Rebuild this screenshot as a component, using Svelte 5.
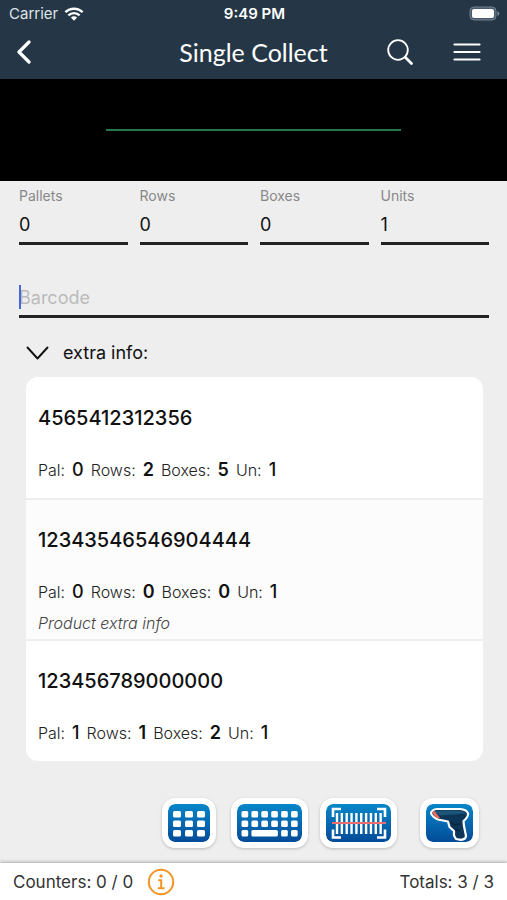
<script lang="ts">
  type Item = {
    code: string;
    pal: number;
    rows: number;
    boxes: number;
    units: number;
    extra?: string;
  };

  let quantities = $state([
    { id: 'pallets', label: 'Pallets', value: '0' },
    { id: 'rows', label: 'Rows', value: '0' },
    { id: 'boxes', label: 'Boxes', value: '0' },
    { id: 'units', label: 'Units', value: '1' },
  ]);

  const items: Item[] = [
    { code: '4565412312356', pal: 0, rows: 2, boxes: 5, units: 1 },
    { code: '12343546546904444', pal: 0, rows: 0, boxes: 0, units: 1, extra: 'Product extra info' },
    { code: '123456789000000', pal: 1, rows: 1, boxes: 2, units: 1 },
  ];

  let barcode = $state('');
  let open = $state(true);

  const pad = [0, 1, 2];
  const keys = [0, 1, 2, 3, 4, 5];
  const bars = [0, 1, 2, 3, 4, 5, 6, 7, 8, 9];
</script>

<div class="screen">
  <header>
    <div class="status">
      <span class="carrier">
        Carrier
        <svg width="20" height="14" viewBox="0 0 20 14" fill="none" stroke="#fff" stroke-width="2.4">
          <path d="M1.4 5.2a12.3 12.3 0 0 1 17.2 0" />
          <path d="M4.4 8.4a8 8 0 0 1 11.2 0" />
          <path d="M10 13.8 6.9 10.6a4.4 4.4 0 0 1 6.2 0Z" fill="#fff" stroke="none" />
        </svg>
      </span>
      <span class="time">9:49 PM</span>
      <svg class="battery" width="31" height="15" viewBox="0 0 31 15">
        <rect x="1" y="1" width="26" height="13" rx="4" fill="#47596a" stroke="#748290" />
        <rect x="3" y="3" width="22" height="9" rx="2" fill="#fff" />
        <path d="M28.5 5v5q1.8-1 1.8-2.5T28.5 5" fill="#82909c" />
      </svg>
    </div>
    <nav>
      <button aria-label="Back">
        <svg width="16" height="26" viewBox="0 0 16 26" fill="none" stroke="#fff" stroke-width="3.2" stroke-linecap="round" stroke-linejoin="round">
          <path d="M14 3 4 13l10 10" />
        </svg>
      </button>
      <h1>Single Collect</h1>
      <button aria-label="Search">
        <svg width="28" height="28" viewBox="0 0 28 28" fill="none" stroke="#fff" stroke-linecap="round">
          <circle cx="12" cy="12" r="9.8" stroke-width="1.8" />
          <path d="m19.5 19.5 6 6" stroke-width="2.8" />
        </svg>
      </button>
      <button aria-label="Menu">
        <svg width="28" height="20" viewBox="0 0 28 20" stroke="#fff" stroke-width="2.2" stroke-linecap="round">
          <path d="M1.5 2.5h25M1.5 10h25M1.5 17.5h25" />
        </svg>
      </button>
    </nav>
  </header>

  <div class="scanner"><div class="beam"></div></div>

  <main>
    <div class="quantities">
      {#each quantities as q (q.id)}
        <div class="field">
          <label for={q.id}>{q.label}</label>
          <input id={q.id} bind:value={q.value} inputmode="numeric" />
        </div>
      {/each}
    </div>

    <div class="barcode">
      {#if !barcode}<span class="caret"></span>{/if}
      <input bind:value={barcode} placeholder="Barcode" aria-label="Barcode" />
    </div>

    <button class="toggle" aria-expanded={open} onclick={() => (open = !open)}>
      <svg width="23" height="14" viewBox="0 0 23 14" fill="none" stroke="#111" stroke-width="1.9" stroke-linecap="round" stroke-linejoin="round">
        <path d="m1.5 1.5 10 11 10-11" />
      </svg>
      extra info:
    </button>

    {#if open}
      <ul>
        {#each items as item (item.code)}
          <li>
            <h2>{item.code}</h2>
            <p class="counts">
              <span>Pal:</span><b>{item.pal}</b>
              <span>Rows:</span><b class="big">{item.rows}</b>
              <span>Boxes:</span><b class="big">{item.boxes}</b>
              <span>Un:</span><b>{item.units}</b>
            </p>
            {#if item.extra}<p class="extra">{item.extra}</p>{/if}
          </li>
        {/each}
      </ul>
    {/if}
  </main>

  <div class="tools">
    <button aria-label="Number pad">
      <svg width="42" height="38" viewBox="0 0 42 38">
        {#each pad as row}
          {#each pad as col}
            <rect x={5 + col * 12} y={7 + row * 9.5} width="8" height="6.5" rx="1.5" fill="#fff" />
          {/each}
        {/each}
      </svg>
    </button>
    <button aria-label="Keyboard">
      <svg width="65" height="38" viewBox="0 0 65 38" fill="#fff">
        {#each keys as col}
          <rect x={4.5 + col * 9.9} y="7" width="6.7" height="6.5" rx="1.5" />
          <rect x={4.5 + col * 9.9} y="16.5" width="6.7" height="6.5" rx="1.5" />
          {#if col === 0 || col > 3}
            <rect x={4.5 + col * 9.9} y="26" width="6.7" height="6.5" rx="1.5" />
          {/if}
        {/each}
        <rect x="14.4" y="26" width="26.5" height="6.5" rx="1.5" />
      </svg>
    </button>
    <button class="scan" aria-label="Scan barcode">
      <svg width="65" height="38" viewBox="0 0 65 38" fill="none" stroke="#fff">
        <path d="M15 5H7v8M51 5h8v8M15 33.5H7v-8M51 33.5h8v-8" stroke-width="2.6" />
        {#each bars as bar}
          <path d="M{11 + bar * 4.85} 9v21" stroke-width="2.4" />
        {/each}
        <path d="M6 19h54" stroke="#ee6b72" stroke-width="2.2" />
      </svg>
    </button>
    <button class="gun" aria-label="Scanner gun">
      <svg width="47" height="38" viewBox="0 0 47 38">
        <path d="M5 9Q6 5.500 11 5H34Q41 5.500 42 9.500 42.500 13 37.500 17L38 22 40 32Q39.500 35.500 35 35.800L30 35 28 31.500V27L23.500 23 22 17.500 12 15.500Q6 13 5 9Z" fill="#0d3557" stroke="#fff" stroke-width="2.2" stroke-linejoin="round" />
        <path d="M8 8Q10 6.500 16 6.500h17q5 .3 7 3L14 11.500Z" fill="#1b5679" />
        <path d="M6.500 8 8.500 7 14 14l-2.500.2Q7.500 12 6.500 8Z" fill="#f06a5f" />
        <path d="m25 18 3 3 6-1M29 26l5 .5" fill="none" stroke="#062541" stroke-width="1.6" />
      </svg>
    </button>
  </div>

  <footer>
    <span>Counters: 0 / 0</span>
    <button aria-label="Counter details">
      <svg width="28" height="28" viewBox="0 0 28 28" fill="none" stroke="#f39325" stroke-width="2">
        <circle cx="14" cy="14" r="12.2" />
        <circle cx="14" cy="8" r="1.7" fill="#f39325" stroke="none" />
        <path d="M11.2 12.2h3v7.8M10.8 20.2h6.7" />
      </svg>
    </button>
    <span class="totals">Totals: 3 / 3</span>
  </footer>
</div>

<style>
  :global(body) { margin: 0; background: #eee; }
  button, input { font: inherit; color: inherit; border: none; background: none; padding: 0; }
  button { cursor: pointer; }
  svg { display: block; }

  .screen {
    display: flex; flex-direction: column;
    min-height: 100vh;
    background: #eee;
    color: #111;
    font-family: Inter, "Liberation Sans", sans-serif;
  }

  header { background: #253746; color: #fff; }
  .status {
    display: grid; grid-template-columns: 1fr auto 1fr; align-items: center;
    height: 27px;
    padding: 0 7px 0 9px;
    font-size: 15px;
  }
  .carrier { display: flex; align-items: center; gap: 6px; color: #dfe4e8; }
  .time { font-weight: 600; }
  .battery { justify-self: end; }
  nav {
    display: grid; grid-template-columns: 106px 1fr 28px 28px; align-items: center;
    column-gap: 39px;
    height: 52px;
    padding: 0 26px 2px 15px;
    box-sizing: border-box;
  }
  nav button { justify-self: start; }
  h1 {
    display: flex; justify-content: center;
    margin: 0;
    font: 400 25px/32px Lato, sans-serif;
    white-space: nowrap;
  }

  .scanner {
    display: flex; align-items: center;
    height: 102px;
    padding: 0 21%;
    background: #000;
  }
  .beam { flex: 1; height: 2px; background: #277746; }

  main { padding: 5px 18px 0 19px; }
  .quantities { display: grid; grid-template-columns: repeat(4, 1fr); gap: 12px; }
  .field { display: flex; flex-direction: column; }
  label { color: #888; font-size: 14px; line-height: 20px; }
  input {
    box-sizing: border-box;
    width: 100%;
    height: 39px;
    border-bottom: 3px solid #222;
    border-radius: 0;
    font-size: 18px;
    outline: none;
  }
  .barcode { position: relative; margin-top: 34px; }
  .barcode input { caret-color: transparent; }
  .barcode input::placeholder { color: #bbb; opacity: 1; }
  .caret {
    position: absolute; left: 0; top: 6px;
    width: 2px; height: 24px;
    background: #4468dc;
  }

  .toggle {
    display: flex; align-items: center; gap: 14px;
    margin: 22px 0 11px 7px;
    font-size: 18px; line-height: 26px;
  }

  ul {
    list-style: none;
    margin: 0 6px 0 7px; padding: 0;
    background: #fff;
    border-radius: 12px;
    overflow: hidden;
  }
  li { padding: 28px 12px 15px; }
  li + li { border-top: 2px solid #eee; padding-top: 27px; }
  li:nth-child(even) { background: #fcfcfc; padding-bottom: 4px; }
  h2 { margin: 0 0 26px; font-size: 20px; line-height: 26px; font-weight: 500; }
  .counts {
    display: flex; align-items: baseline; gap: 7px;
    margin: 0;
    font-size: 16px; line-height: 26px; font-weight: 300;
    color: #222;
  }
  b { font-size: 18px; font-weight: 500; color: #111; }
  .big { font-weight: 600; }
  .extra { margin: 6px 0 0; font-size: 16px; line-height: 24px; font-style: italic; font-weight: 300; color: #444; }

  .tools {
    display: flex; justify-content: flex-end;
    margin-top: auto;
    padding: 24px 28px 15px;
  }
  .tools button {
    border: 6px solid #fff;
    border-radius: 13px;
    background: linear-gradient(#0787c9, #034b98) padding-box, #fff;
    box-shadow: 0 1px 3px #bbb;
  }
  .tools button + button { margin-left: 15px; }
  .tools .scan.scan { margin-left: 12px; }
  .tools .gun.gun { margin-left: 23px; }

  footer {
    display: flex; align-items: center; gap: 14px;
    height: 37px;
    padding: 0 13px;
    background: #fff;
    box-shadow: 0 -1px 3px #aaa;
    color: #333;
    font-size: 17px;
  }
  .totals { margin-left: auto; }
</style>
